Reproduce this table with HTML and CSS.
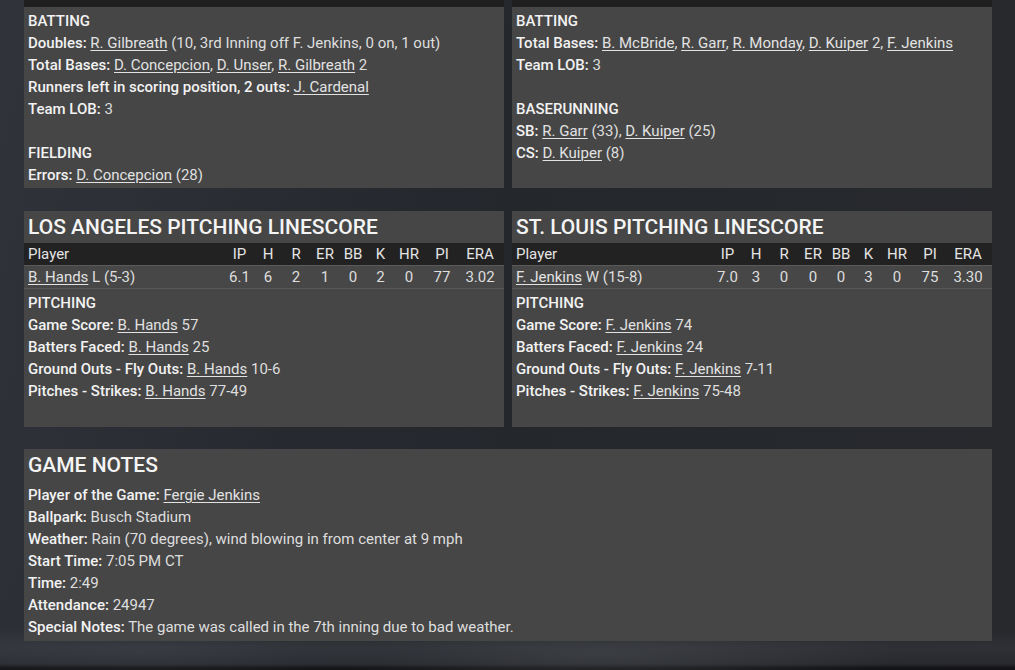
FILE: index.html
```html
<!DOCTYPE html>
<html>
<head>
<meta charset="utf-8">
<link rel="stylesheet" href="styles.css">
</head>
<body>
<div class="page">
  <div class="row two">
    <section class="panel">
      <div class="strip"></div>
      <div class="body tight">
        <div class="line"><b>BATTING</b></div>
        <div class="line"><b>Doubles:</b> <a>R. Gilbreath</a> (10, 3rd Inning off F. Jenkins, 0 on, 1 out)</div>
        <div class="line"><b>Total Bases:</b> <a>D. Concepcion</a>, <a>D. Unser</a>, <a>R. Gilbreath</a> 2</div>
        <div class="line"><b>Runners left in scoring position, 2 outs:</b> <a>J. Cardenal</a></div>
        <div class="line"><b>Team LOB:</b> 3</div>
        <div class="line"></div>
        <div class="line"><b>FIELDING</b></div>
        <div class="line"><b>Errors:</b> <a>D. Concepcion</a> (28)</div>
      </div>
    </section>
    <section class="panel">
      <div class="strip"></div>
      <div class="body tight">
        <div class="line"><b>BATTING</b></div>
        <div class="line"><b>Total Bases:</b> <a>B. McBride</a>, <a>R. Garr</a>, <a>R. Monday</a>, <a>D. Kuiper</a> 2, <a>F. Jenkins</a></div>
        <div class="line"><b>Team LOB:</b> 3</div>
        <div class="line"></div>
        <div class="line"><b>BASERUNNING</b></div>
        <div class="line"><b>SB:</b> <a>R. Garr</a> (33), <a>D. Kuiper</a> (25)</div>
        <div class="line"><b>CS:</b> <a>D. Kuiper</a> (8)</div>
      </div>
    </section>
  </div>

  <div class="row two gap-top">
    <section class="panel">
      <h2 class="title">LOS ANGELES PITCHING LINESCORE</h2>
      <div class="grid head">
        <span class="player">Player</span><span>IP</span><span>H</span><span>R</span><span>ER</span><span>BB</span><span>K</span><span>HR</span><span>PI</span><span>ERA</span>
      </div>
      <div class="grid data">
        <span class="player"><a>B. Hands</a> L (5-3)</span><span>6.1</span><span>6</span><span>2</span><span>1</span><span>0</span><span>2</span><span>0</span><span>77</span><span>3.02</span>
      </div>
      <div class="body">
        <div class="line"><b>PITCHING</b></div>
        <div class="line"><b>Game Score:</b> <a>B. Hands</a> 57</div>
        <div class="line"><b>Batters Faced:</b> <a>B. Hands</a> 25</div>
        <div class="line"><b>Ground Outs - Fly Outs:</b> <a>B. Hands</a> 10-6</div>
        <div class="line"><b>Pitches - Strikes:</b> <a>B. Hands</a> 77-49</div>
        <div class="line"></div>
      </div>
    </section>
    <section class="panel">
      <h2 class="title">ST. LOUIS PITCHING LINESCORE</h2>
      <div class="grid head">
        <span class="player">Player</span><span>IP</span><span>H</span><span>R</span><span>ER</span><span>BB</span><span>K</span><span>HR</span><span>PI</span><span>ERA</span>
      </div>
      <div class="grid data">
        <span class="player"><a>F. Jenkins</a> W (15-8)</span><span>7.0</span><span>3</span><span>0</span><span>0</span><span>0</span><span>3</span><span>0</span><span>75</span><span>3.30</span>
      </div>
      <div class="body">
        <div class="line"><b>PITCHING</b></div>
        <div class="line"><b>Game Score:</b> <a>F. Jenkins</a> 74</div>
        <div class="line"><b>Batters Faced:</b> <a>F. Jenkins</a> 24</div>
        <div class="line"><b>Ground Outs - Fly Outs:</b> <a>F. Jenkins</a> 7-11</div>
        <div class="line"><b>Pitches - Strikes:</b> <a>F. Jenkins</a> 75-48</div>
        <div class="line"></div>
      </div>
    </section>
  </div>

  <section class="panel notes">
    <h2 class="title">GAME NOTES</h2>
    <div class="body">
      <div class="line"><b>Player of the Game:</b> <a>Fergie Jenkins</a></div>
      <div class="line"><b>Ballpark:</b> Busch Stadium</div>
      <div class="line"><b>Weather:</b> Rain (70 degrees), wind blowing in from center at 9 mph</div>
      <div class="line"><b>Start Time:</b> 7:05 PM CT</div>
      <div class="line"><b>Time:</b> 2:49</div>
      <div class="line"><b>Attendance:</b> 24947</div>
      <div class="line"><b>Special Notes:</b> The game was called in the 7th inning due to bad weather.</div>
    </div>
  </section>
</div>
</body>
</html>
```

FILE: styles.css
```css
html, body {
  margin: 0;
  padding: 0;
  height: 100%;
}
body {
  font-family: Roboto, "Liberation Sans", Arial, sans-serif;
  font-size: 15px;
  color: #dedede;
  background-color: #25282d;
  background-image:
    radial-gradient(ellipse 300px 40px at 600px 655px, rgba(90,92,98,0.35), rgba(0,0,0,0)),
    radial-gradient(ellipse 250px 30px at 150px 652px, rgba(80,82,90,0.3), rgba(0,0,0,0)),
    linear-gradient(180deg, rgba(0,0,0,0) 0, rgba(0,0,0,0) 630px, rgba(60,62,68,0.35) 648px, rgba(40,42,46,0.5) 664px, rgba(18,18,20,0.95) 668px),
    linear-gradient(120deg, rgba(255,255,255,0.03) 0, rgba(255,255,255,0) 40%),
    linear-gradient(90deg, #2a2d33 0, #24272c 50%, #27292d 100%);
  overflow: hidden;
}
.page {
  width: 968px;
  margin-left: 24px;
  display: flex;
  flex-direction: column;
}
.row.two {
  display: grid;
  grid-template-columns: 480px 480px;
  column-gap: 8px;
}
.gap-top {
  margin-top: 23px;
}
.panel {
  background: #464646;
}
.notes {
  margin-top: 22px;
}
.strip {
  height: 7px;
  background: #1f1f1f;
}
.body {
  padding: 3px 4px 3px;
}
.body.tight {
  padding-bottom: 2px;
}
.line {
  height: 22px;
  line-height: 22px;
  white-space: nowrap;
}
b {
  font-weight: 500;
  color: #f2f2f2;
}
a {
  color: #e2e2e2;
  text-decoration: underline;
  text-underline-offset: 2px;
  text-decoration-thickness: 1px;
}
.title {
  margin: 0;
  height: 32px;
  line-height: 33px;
  padding: 0 4px;
  font-size: 21px;
  font-weight: 500;
  color: #f4f4f4;
}
.grid {
  display: grid;
  grid-template-columns: 1fr 31px 26px 30px 28px 28px 27px 30px 36px 40px;
  padding: 0 4px;
  line-height: 22px;
  text-align: center;
  white-space: nowrap;
}
.grid .player {
  text-align: left;
}
.head {
  background: #222222;
  color: #e4e4e4;
}
.data {
  border-top: 1px solid #5a5a5a;
  border-bottom: 1px solid #585858;
  background: #474747;
}
```
